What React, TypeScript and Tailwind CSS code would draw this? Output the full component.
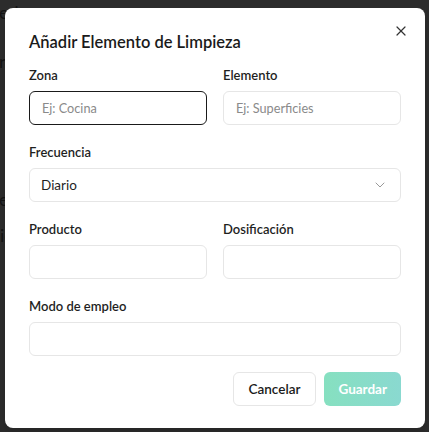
import React from 'react';
import { X, ChevronDown } from 'lucide-react';

function Field({ label, placeholder, focused }: { label: string; placeholder?: string; focused?: boolean }) {
  return (
    <div className="flex flex-col gap-[6px]">
      <label className="text-[13px] font-semibold text-[#1f1f1f] leading-[20px]">{label}</label>
      <input
        placeholder={placeholder}
        className={
          focused
            ? 'h-[34px] w-full rounded-md border border-[#1a1a1a] bg-white px-3 text-[12.7px] placeholder:text-[#8a8a8a] outline-none'
            : 'h-[34px] w-full rounded-md border border-[#e6e6e6] bg-white px-3 text-[12.7px] placeholder:text-[#8a8a8a] outline-none'
        }
      />
    </div>
  );
}

export default function App() {
  return (
    <div
      className="relative h-[432px] w-[429px] overflow-hidden bg-[#2c2c2c]"
      style={{ fontFamily: 'Lato, "Noto Sans", sans-serif' }}
    >
      {/* page behind the overlay */}
      <div className="absolute inset-0 text-[18px] text-[#141414] leading-none">
        <div className="absolute left-[-1px] top-[3px]">ed</div>
        <div className="absolute left-[-1px] top-[52px]">ra</div>
        <div className="absolute left-[-1px] top-[190px]">ed</div>
        <div className="absolute left-[0px] top-[226px]">ic</div>
      </div>

      <div className="relative ml-[5px] mt-[8px] h-[420px] w-[420px] rounded-lg bg-white px-6 pt-[21px] pb-6 shadow-lg">
        <button className="absolute right-[16px] top-[15px] text-[#333]">
          <X className="h-4 w-4" strokeWidth={1.8} />
        </button>
        <h2 className="text-[16.5px] font-semibold text-[#1a1a1a] leading-[26px]">Añadir Elemento de Limpieza</h2>

        <div className="mt-[10px] flex flex-col gap-[17px]">
          <div className="grid grid-cols-2 gap-4">
            <Field label="Zona" placeholder="Ej: Cocina" focused />
            <Field label="Elemento" placeholder="Ej: Superficies" />
          </div>

          <div className="flex flex-col gap-[6px]">
            <label className="text-[13px] font-semibold text-[#1f1f1f] leading-[20px]">Frecuencia</label>
            <div className="flex h-[34px] items-center justify-between rounded-md border border-[#e6e6e6] bg-white pl-[11px] pr-3 text-[13.5px] text-[#1f1f1f]">
              <span>Diario</span>
              <ChevronDown className="h-4 w-4 text-[#999]" strokeWidth={1.5} />
            </div>
          </div>

          <div className="grid grid-cols-2 gap-4">
            <Field label="Producto" />
            <Field label="Dosificación" />
          </div>

          <Field label="Modo de empleo" />
        </div>

        <div className="mt-4 flex justify-end gap-2">
          <button className="h-[34px] rounded-md border border-[#e6e6e6] bg-white px-[15px] text-[13.5px] font-semibold text-[#1a1a1a]">
            Cancelar
          </button>
          <button className="h-[34px] rounded-md bg-gradient-to-r from-[#86e0c0] to-[#8ad9d0] px-[14px] text-[13.5px] font-bold text-white">
            Guardar
          </button>
        </div>
      </div>
    </div>
  );
}
